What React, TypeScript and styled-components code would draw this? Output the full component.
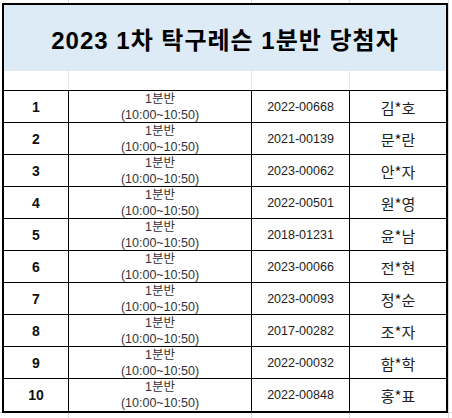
import styled, { createGlobalStyle } from "styled-components";

const GlobalStyle = createGlobalStyle`
  html, body {
    margin: 0;
    padding: 0;
    background-color: #ffffff;
    /* faint spreadsheet gridlines outside the printed box */
    background-image:
      linear-gradient(to right, transparent 68px, #dadada 68px, #dadada 69px, transparent 69px),
      linear-gradient(to right, transparent 251px, #dadada 251px, #dadada 252px, transparent 252px),
      linear-gradient(to right, transparent 349px, #dadada 349px, #dadada 350px, transparent 350px),
      linear-gradient(to right, transparent 448px, #dadada 448px, #dadada 449px, transparent 449px),
      linear-gradient(to bottom, transparent 412px, #dadada 412px, #dadada 413px, transparent 413px);
    background-repeat: no-repeat;
    font-family: "Liberation Sans", Arial, "Noto Sans CJK KR", sans-serif;
  }
  body {
    width: 452px;
    height: 418px;
    overflow: hidden;
  }
`;

const COLS = "65px 183px 98px 96px";

const Sheet = styled.div`
  margin: 3px 0 0 2px;
  width: 442px;
  border: 2px solid #000;
  background: #fff;
`;

const TitleBand = styled.div`
  height: 66px;
  display: flex;
  align-items: center;
  justify-content: center;
  background: #ddebf7;
  font-weight: bold;
  font-size: 24px;
  letter-spacing: 1px;
  color: #000;
  font-family: "Liberation Sans", Arial, "Noto Sans CJK KR", sans-serif;
`;

const BlankRow = styled.div`
  display: grid;
  grid-template-columns: ${COLS};
  height: 19px;
  border-bottom: 1px solid #000;
`;

const BlankCell = styled.div<{ $last?: boolean }>`
  border-right: ${(p) => (p.$last ? "none" : "1px solid #e2ebdc")};
`;

const Row = styled.div<{ $last?: boolean }>`
  display: grid;
  grid-template-columns: ${COLS};
  height: 32px;
  box-sizing: border-box;
  border-bottom: ${(p) => (p.$last ? "none" : "1px solid #000")};
`;

const Cell = styled.div<{ $last?: boolean }>`
  display: flex;
  flex-direction: column;
  align-items: center;
  justify-content: center;
  border-right: ${(p) => (p.$last ? "none" : "1px solid #000")};
  text-align: center;
  color: #222;
`;

const Num = styled(Cell)`
  font-weight: bold;
  font-size: 14px;
  color: #111;
`;

const Session = styled(Cell)`
  font-size: 12.5px;
  line-height: 16px;
  color: #333;
`;

const Code = styled(Cell)`
  font-size: 12.5px;
`;

const Name = styled(Cell)`
  font-size: 15px;
  font-family: "Noto Sans CJK KR", sans-serif;
  color: #222;
`;

const winners = [
  ["2022-00668", "김*호"],
  ["2021-00139", "문*란"],
  ["2023-00062", "안*자"],
  ["2022-00501", "원*영"],
  ["2018-01231", "윤*남"],
  ["2023-00066", "전*현"],
  ["2023-00093", "정*순"],
  ["2017-00282", "조*자"],
  ["2022-00032", "함*학"],
  ["2022-00848", "홍*표"],
];

export default function App() {
  return (
    <>
      <GlobalStyle />
      <Sheet>
        <TitleBand>2023 1차 탁구레슨 1분반 당첨자</TitleBand>
        <BlankRow>
          <BlankCell />
          <BlankCell />
          <BlankCell />
          <BlankCell $last />
        </BlankRow>
        {winners.map(([code, name], i) => (
          <Row key={code} $last={i === winners.length - 1}>
            <Num>{i + 1}</Num>
            <Session>
              <span>1분반</span>
              <span>(10:00~10:50)</span>
            </Session>
            <Code>{code}</Code>
            <Name $last>{name}</Name>
          </Row>
        ))}
      </Sheet>
    </>
  );
}
